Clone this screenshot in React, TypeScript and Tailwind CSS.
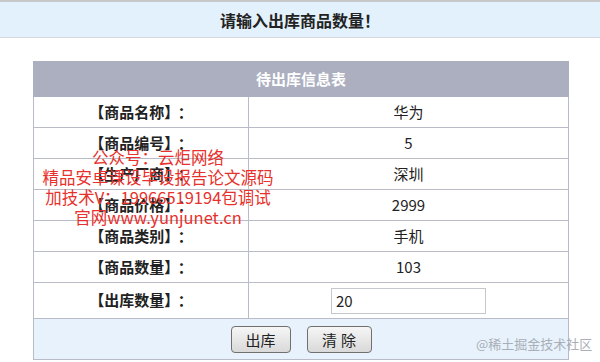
import React from 'react'

const ROWS: Array<{ label: string; value: string }> = [
  { label: '【商品名称】', value: '华为' },
  { label: '【商品编号】', value: '5' },
  { label: '【生产厂商】', value: '深圳' },
  { label: '【商品价格】', value: '2999' },
  { label: '【商品类别】', value: '手机' },
  { label: '【商品数量】', value: '103' },
]

const FONT = "font-['Microsoft_YaHei','Noto_Sans_CJK_SC',sans-serif]"

export default function App() {
  return (
    <div className={`relative w-[600px] h-[362px] overflow-hidden bg-white text-[#222] ${FONT}`}>
      {/* top notice */}
      <div className="h-[38px] border-t-2 border-b border-t-[#c8c8c8] border-b-[#d4d8dc] bg-[#e3f1fc] flex items-center justify-center">
        <span className="text-[16px] font-bold leading-none">请输入出库商品数量！</span>
      </div>

      <div className="pt-[23px] pl-[33px]">
        <table className="w-[536px] border-collapse text-[15px]">
          <thead>
            <tr className="h-[35px]">
              <th colSpan={2} className="bg-[#abafbf] border border-[#abafbf] text-white text-[15px] font-bold">
                待出库信息表
              </th>
            </tr>
          </thead>
          <tbody>
            {ROWS.map(r => (
              <tr key={r.label} className="h-[31px]">
                <td className="w-[215px] border border-[#b9bcc6] text-center font-bold">
                  {r.label}<span className="ml-[6px]">：</span>
                </td>
                <td className="border border-[#b9bcc6] text-center">{r.value}</td>
              </tr>
            ))}
            <tr className="h-[36px]">
              <td className="border border-[#b9bcc6] text-center font-bold">
                【出库数量】<span className="ml-[6px]">：</span>
              </td>
              <td className="border border-[#b9bcc6] text-center">
                <input
                  defaultValue="20"
                  className="w-[155px] h-[26px] border border-[#c4c8cc] px-[4px] text-[15px] outline-none align-middle"
                />
              </td>
            </tr>
            <tr className="h-[41px]">
              <td colSpan={2} className="border border-[#b9bcc6] bg-[#e7f2fc]">
                <div className="flex justify-center gap-[16px] pt-[1px]">
                  <button className="w-[60px] h-[27px] rounded-[4px] border border-[#707070] bg-gradient-to-b from-[#f6f6f6] to-[#d9d9d9] text-[15px] leading-none">
                    出库
                  </button>
                  <button className="w-[65px] h-[27px] rounded-[4px] border border-[#707070] bg-gradient-to-b from-[#f6f6f6] to-[#d9d9d9] text-[15px] leading-none tracking-[4px] pl-[4px]">
                    清除
                  </button>
                </div>
              </td>
            </tr>
          </tbody>
        </table>
      </div>

      {/* red watermark overlay */}
      <div className="absolute left-[38px] top-[147px] w-[240px] flex flex-col items-center text-[#e8302c] text-[16.5px] leading-[20px]">
        <span>公众号：云炬网络</span>
        <span>精品安卓课设毕设报告论文源码</span>
        <span>加技术V：19966519194包调试</span>
        <span>官网www.yunjunet.cn</span>
      </div>

      <div className="absolute left-[476px] top-[334px] text-[13px] text-[#a3a8b0] opacity-90">@稀土掘金技术社区</div>
    </div>
  )
}
